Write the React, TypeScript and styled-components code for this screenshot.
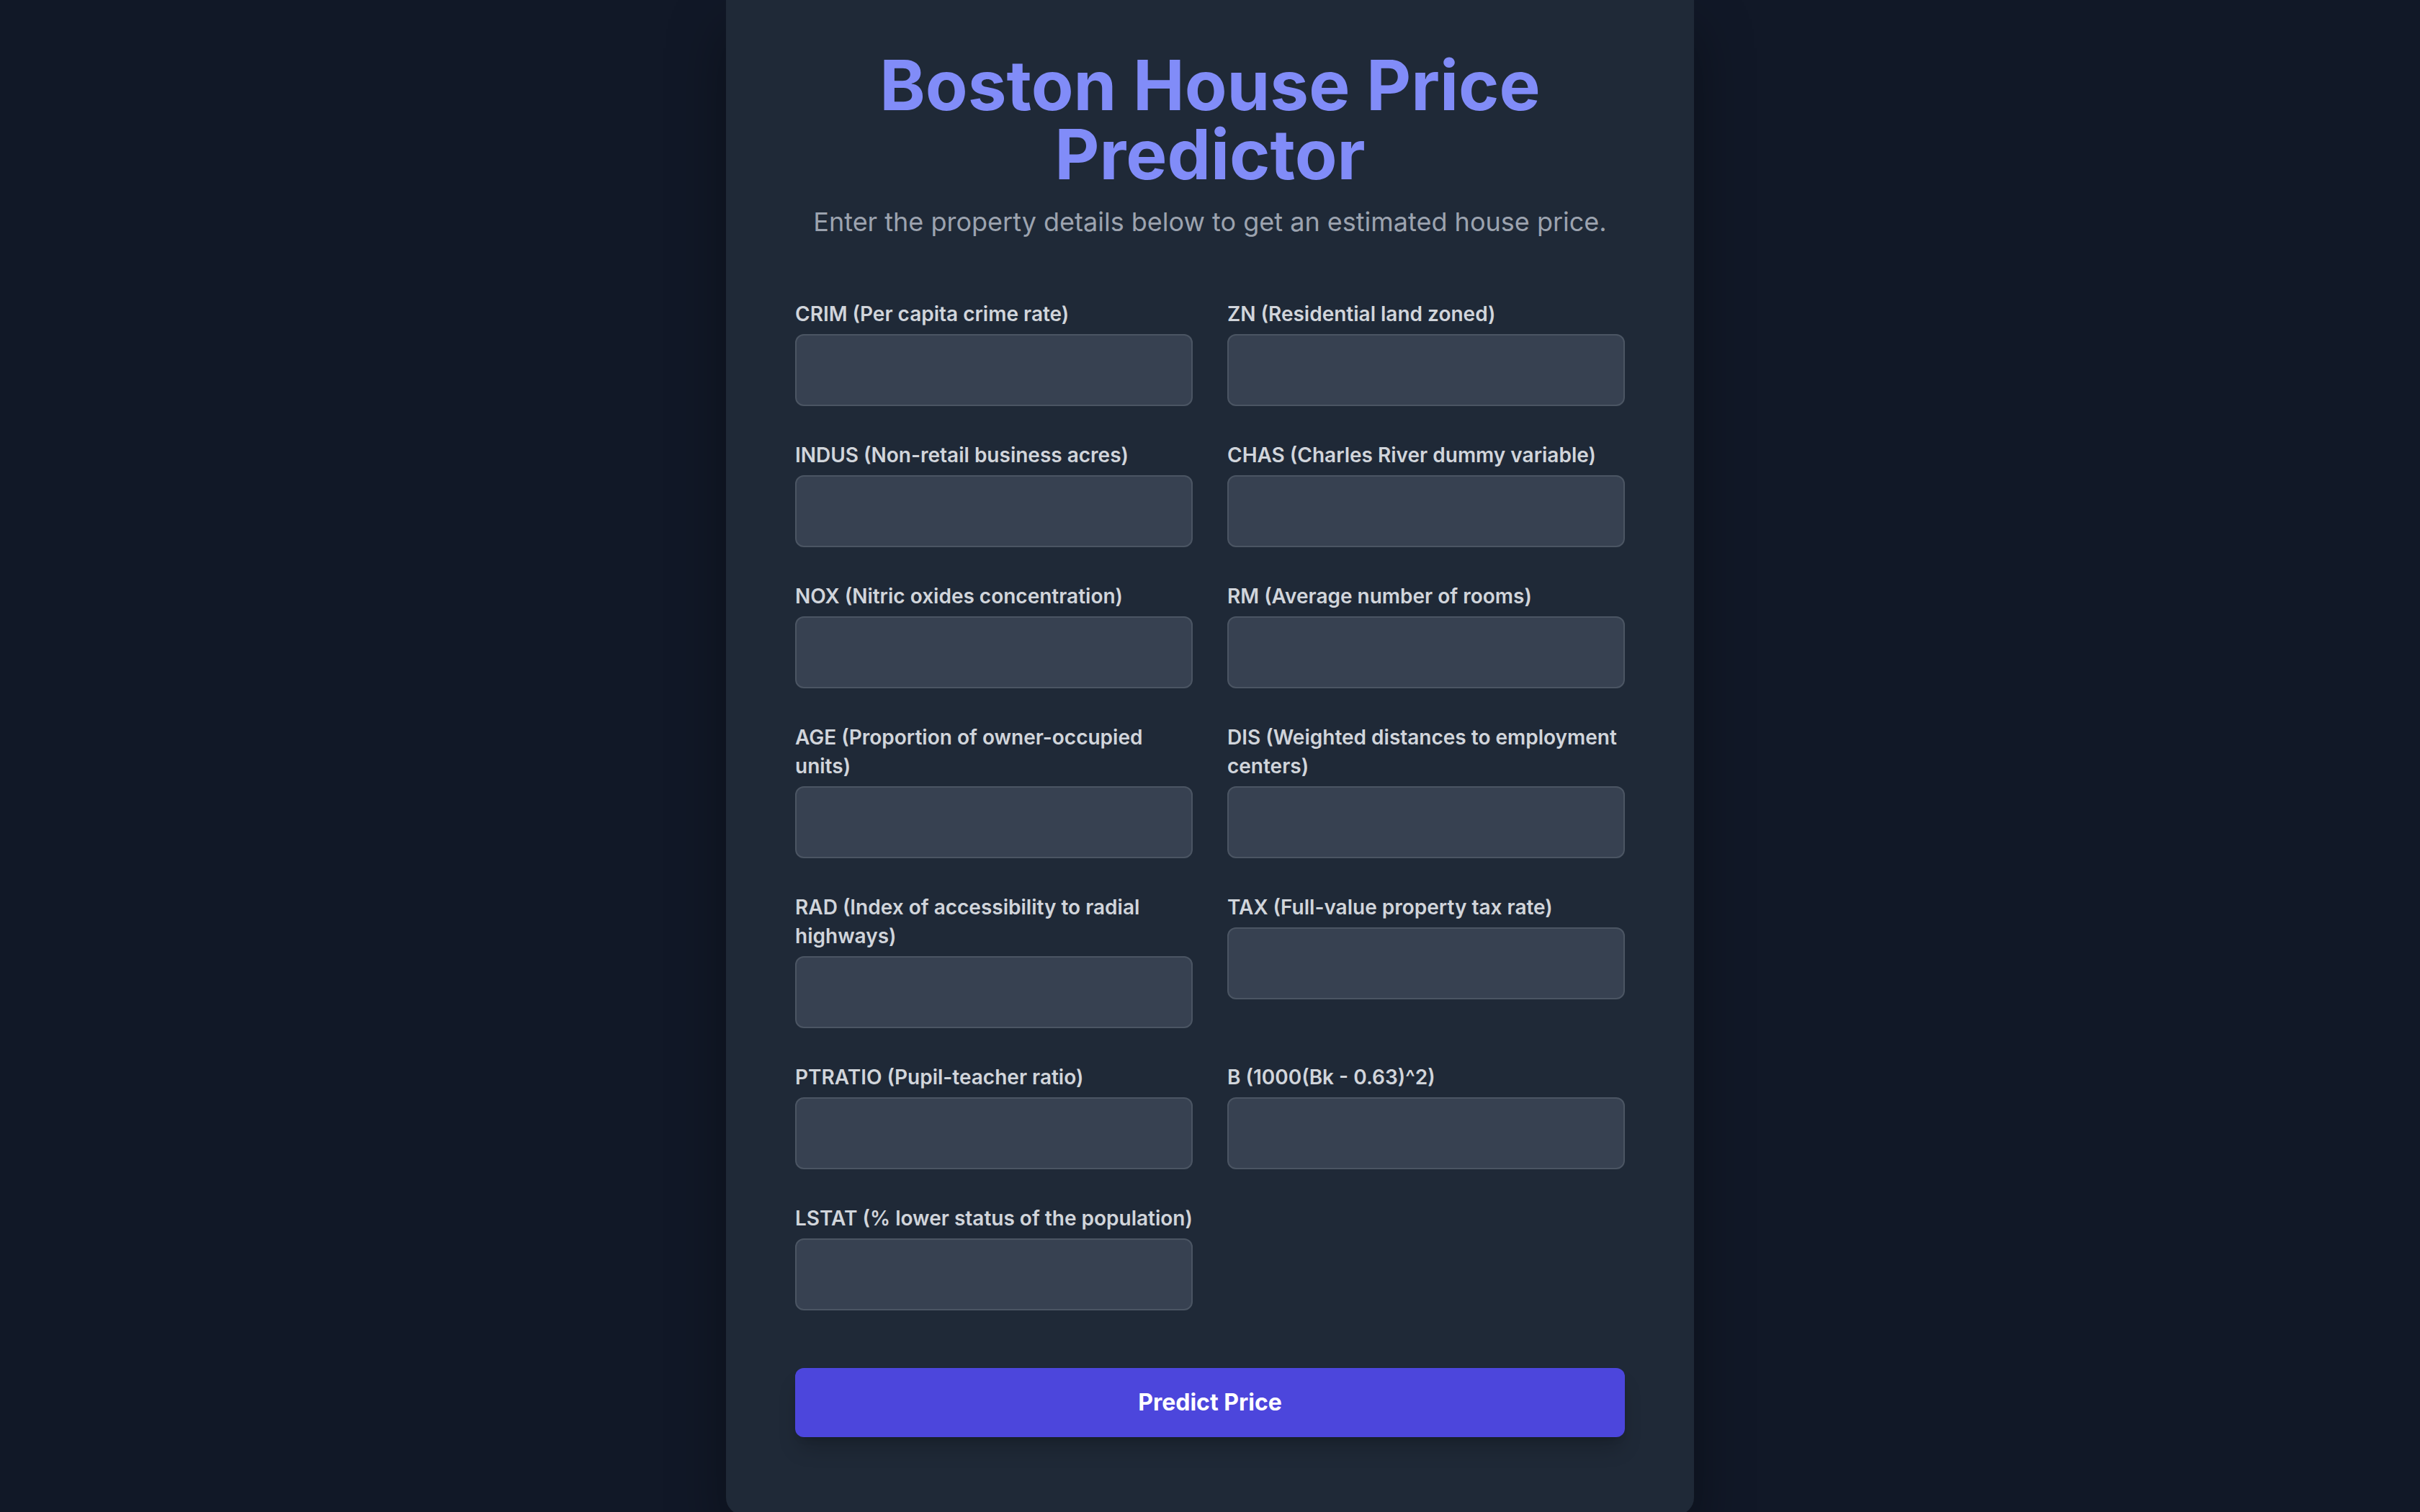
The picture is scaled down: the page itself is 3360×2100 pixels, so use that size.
import React, { useState } from 'react';
import styled, { createGlobalStyle } from 'styled-components';

const FIELDS = [
  { name: 'CRIM', label: 'CRIM (Per capita crime rate)' },
  { name: 'ZN', label: 'ZN (Residential land zoned)' },
  { name: 'INDUS', label: 'INDUS (Non-retail business acres)' },
  { name: 'CHAS', label: 'CHAS (Charles River dummy variable)' },
  { name: 'NOX', label: 'NOX (Nitric oxides concentration)' },
  { name: 'RM', label: 'RM (Average number of rooms)' },
  { name: 'AGE', label: 'AGE (Proportion of owner-occupied units)' },
  { name: 'DIS', label: 'DIS (Weighted distances to employment centers)' },
  { name: 'RAD', label: 'RAD (Index of accessibility to radial highways)' },
  { name: 'TAX', label: 'TAX (Full-value property tax rate)' },
  { name: 'PTRATIO', label: 'PTRATIO (Pupil-teacher ratio)' },
  { name: 'B', label: 'B (1000(Bk - 0.63)^2)' },
  { name: 'LSTAT', label: 'LSTAT (% lower status of the population)' },
];

export default function App() {
  const [values, setValues] = useState<Record<string, string>>({});

  const handleChange = (e: React.ChangeEvent<HTMLInputElement>) => {
    const { name, value } = e.target;
    setValues({
      ...values,
      [name]: value,
    });
  };

  const handleSubmit = (e: React.FormEvent) => {
    e.preventDefault();
  };

  return (
    <>
      <GlobalStyle />
      <Page>
        <Card>
          <Title>Boston House Price Predictor</Title>
          <Subtitle>
            Enter the property details below to get an estimated house price.
          </Subtitle>
          <form onSubmit={handleSubmit}>
            <FieldGrid>
              {FIELDS.map((field) => (
                <Field key={field.name}>
                  <Label htmlFor={field.name}>{field.label}</Label>
                  <Input
                    id={field.name}
                    name={field.name}
                    type="number"
                    step="any"
                    value={values[field.name] || ''}
                    onChange={handleChange}
                  />
                </Field>
              ))}
            </FieldGrid>
            <SubmitButton type="submit">Predict Price</SubmitButton>
          </form>
        </Card>
      </Page>
    </>
  );
}

const GlobalStyle = createGlobalStyle`
  body {
    margin: 0;
    background: #111827;
    font-family: Inter, "Noto Sans", "Liberation Sans", sans-serif;
  }
  * {
    box-sizing: border-box;
  }
`;

const Page = styled.div`
  min-height: 100vh;
  display: flex;
  justify-content: center;
`;

const Card = styled.div`
  width: 1344px;
  padding: 70px 96px 108px;
  background: #1f2937;
  border-radius: 0 0 24px 24px;
  box-shadow: 0 40px 80px rgba(0, 0, 0, 0.35);
`;

const Title = styled.h1`
  margin: 0;
  text-align: center;
  font-size: 96px;
  line-height: 96px;
  font-weight: 700;
  color: #818cf8;
`;

const Subtitle = styled.p`
  margin: 18px 0 80px;
  text-align: center;
  font-size: 36px;
  line-height: 56px;
  color: #9ca3af;
`;

const FieldGrid = styled.div`
  display: grid;
  grid-template-columns: 1fr 1fr;
  gap: 48px;
`;

const Field = styled.div`
  display: flex;
  flex-direction: column;
`;

const Label = styled.label`
  margin-bottom: 8px;
  font-size: 28px;
  line-height: 40px;
  font-weight: 600;
  color: #d1d5db;
`;

const Input = styled.input`
  width: 100%;
  padding: 24px 32px;
  font-family: inherit;
  font-size: 32px;
  line-height: 48px;
  color: #f3f4f6;
  background: #374151;
  border: 2px solid #4b5563;
  border-radius: 12px;
  outline: none;
  appearance: textfield;
  &::-webkit-outer-spin-button,
  &::-webkit-inner-spin-button {
    -webkit-appearance: none;
    margin: 0;
  }
`;

const SubmitButton = styled.button`
  display: block;
  width: 100%;
  margin-top: 80px;
  padding: 24px;
  font-family: inherit;
  font-size: 32px;
  line-height: 48px;
  font-weight: 700;
  color: #ffffff;
  background: #4c46dc;
  border: none;
  border-radius: 12px;
  box-shadow: 0 20px 30px -6px rgba(0, 0, 0, 0.2), 0 8px 12px -8px rgba(0, 0, 0, 0.2);
  cursor: pointer;
`;
